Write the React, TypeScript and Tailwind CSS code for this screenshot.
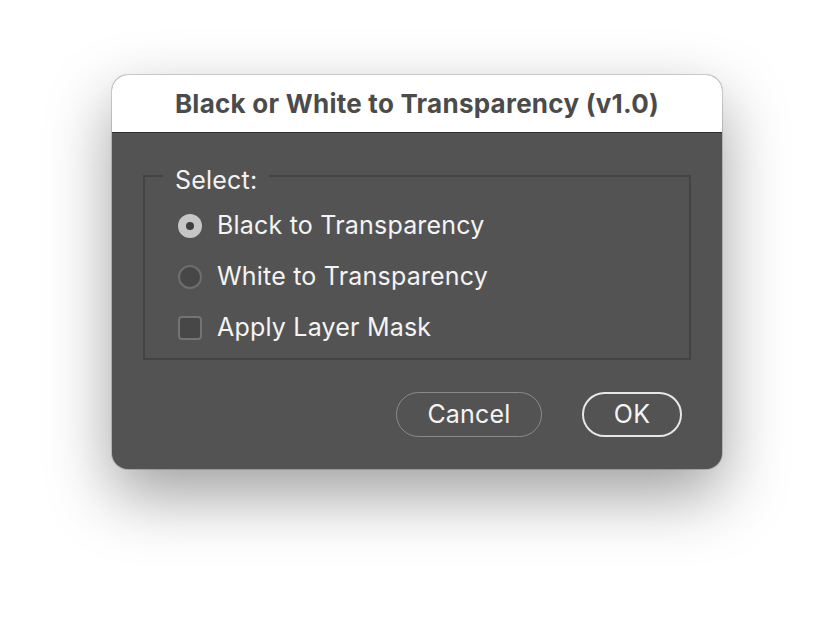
import React, { useState } from 'react'

type Choice = 'black' | 'white'

function Radio({ checked }: { checked: boolean }) {
  return checked ? (
    <span className="flex h-[24px] w-[24px] shrink-0 items-center justify-center rounded-full bg-[#c6c6c6]">
      <span className="h-[8px] w-[8px] rounded-full bg-[#3e3e3e]" />
    </span>
  ) : (
    <span className="h-[24px] w-[24px] shrink-0 rounded-full border-2 border-[#6e6e6e] bg-[#474747]" />
  )
}

export default function App() {
  const [choice, setChoice] = useState<Choice>('black')
  const [mask, setMask] = useState(false)

  const options: { id: Choice; label: string }[] = [
    { id: 'black', label: 'Black to Transparency' },
    { id: 'white', label: 'White to Transparency' },
  ]

  return (
    <div className="min-h-[618px] w-[834px] bg-white pl-[112px] pt-[75px] font-['Inter',sans-serif]">
      <div className="flex h-[394px] w-[610px] flex-col overflow-hidden rounded-[16px] bg-[#535353] shadow-[0_26px_65px_rgba(0,0,0,0.38),0_0_0_1px_rgba(0,0,0,0.16)]">
        {/* Title bar */}
        <div className="flex h-[58px] shrink-0 items-center justify-center border-b border-[#2e2e2e] bg-white">
          <span className="text-[26px] font-bold tracking-[0.25px] text-[#4b4b4b]">
            Black or White to Transparency (v1.0)
          </span>
        </div>

        <div className="flex flex-1 flex-col px-[31px] pt-[27px]">
          <fieldset className="h-[200px] border-2 border-[#434343]">
            <legend className="ml-[18px] px-[12px] pt-[8px] text-[25px] leading-[24px] tracking-[0.2px] text-[#f2f2f2]">
              Select:
            </legend>
            <div className="flex flex-col gap-[26px] pl-[33px] pt-[21px]">
              {options.map((o) => (
                <label
                  key={o.id}
                  className="flex h-[25px] cursor-pointer items-center gap-[15px] text-[25px] tracking-[0.2px] text-[#f4f4f4]"
                  onClick={() => setChoice(o.id)}
                >
                  <Radio checked={choice === o.id} />
                  <span>{o.label}</span>
                </label>
              ))}
              <label
                className="flex h-[25px] cursor-pointer items-center gap-[15px] text-[25px] tracking-[0.2px] text-[#f4f4f4]"
                onClick={() => setMask(!mask)}
              >
                <span className="flex h-[24px] w-[24px] shrink-0 items-center justify-center rounded-[4px] border-2 border-[#737373] bg-[#474747] text-[16px] leading-none">
                  {mask ? '✓' : ''}
                </span>
                <span>Apply Layer Mask</span>
              </label>
            </div>
          </fieldset>

          <div className="mt-[32px] flex justify-end gap-[40px] pr-[9px]">
            <button className="flex h-[45px] w-[146px] items-center justify-center rounded-full border-[1.5px] border-[#8a8a8a] text-[25px] tracking-[0.2px] text-[#f4f4f4]">
              Cancel
            </button>
            <button className="flex h-[45px] w-[100px] items-center justify-center rounded-full border-2 border-[#e6e6e6] text-[25px] tracking-[0.2px] text-[#f4f4f4]">
              OK
            </button>
          </div>
        </div>
      </div>
    </div>
  )
}
